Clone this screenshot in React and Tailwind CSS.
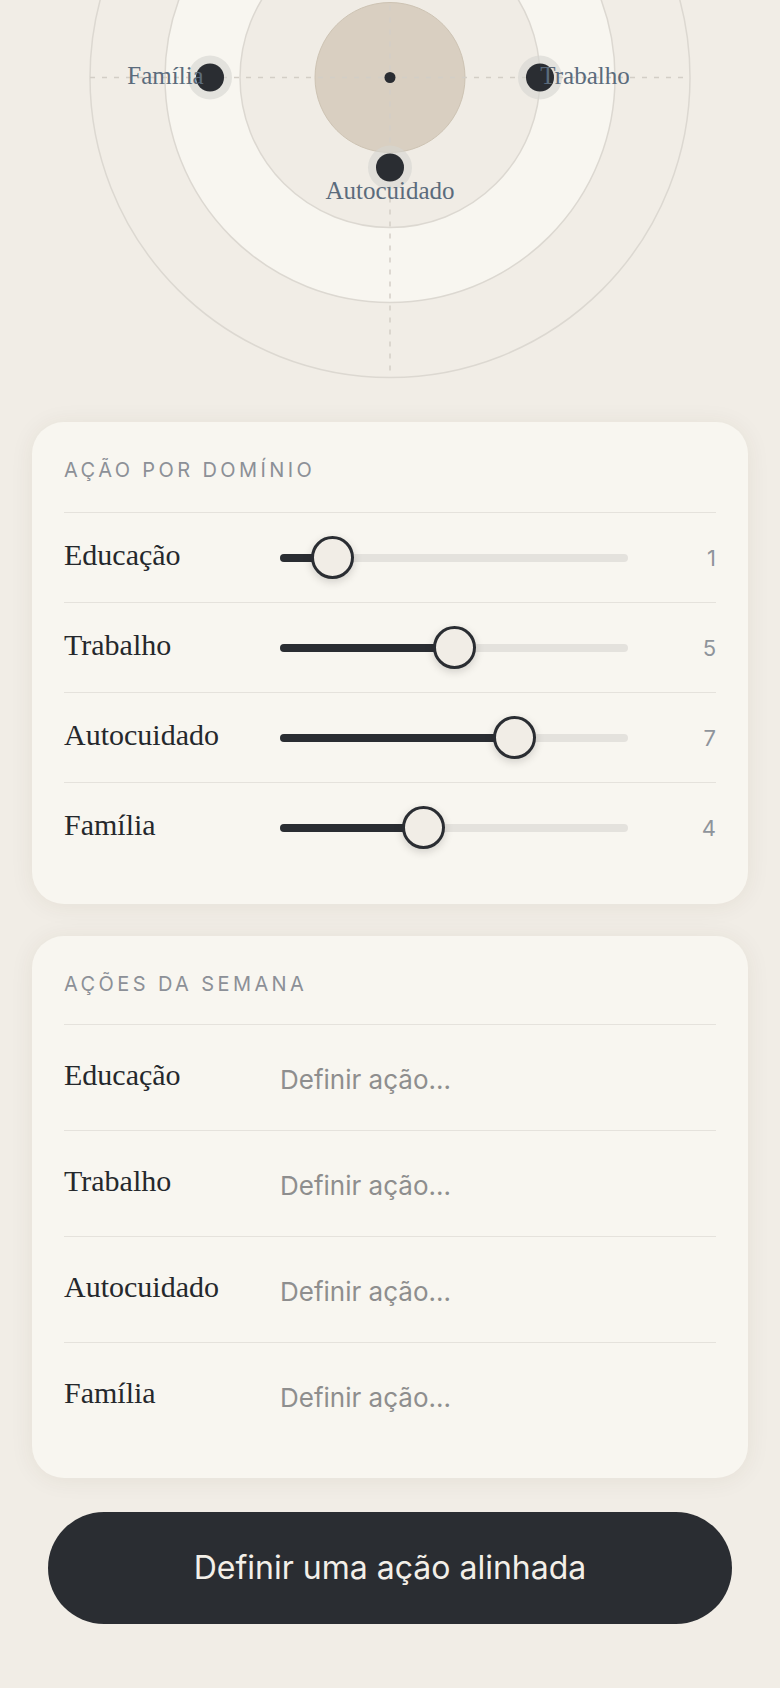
const domains = [
  { name: 'Educação', value: 1, dir: 'top' },
  { name: 'Trabalho', value: 5, dir: 'right' },
  { name: 'Autocuidado', value: 7, dir: 'bottom' },
  { name: 'Família', value: 4, dir: 'left' },
];

const CX = 390;
const CY = 77.5;

// distance from centre grows as the value shrinks
const dotPos = (d) => {
  const r = (10 - d.value) * 30;
  if (d.dir === 'top') return { x: CX, y: CY - r };
  if (d.dir === 'right') return { x: CX + r, y: CY };
  if (d.dir === 'bottom') return { x: CX, y: CY + r };
  return { x: CX - r, y: CY };
};

const labelPos = (d, p) => {
  if (d.dir === 'right') return { x: p.x + 45, y: p.y + 6 };
  if (d.dir === 'left') return { x: p.x - 44.5, y: p.y + 6 };
  if (d.dir === 'bottom') return { x: p.x, y: p.y + 31 };
  return { x: p.x, y: p.y - 26 };
};

const Target = () => (
  <svg width="780" height="390" viewBox="0 0 780 390" className="block shrink-0">
    <circle cx={CX} cy={CY} r="300" fill="#f1ede6" stroke="#dcd8d1" strokeWidth="1.5" />
    <circle cx={CX} cy={CY} r="225" fill="#f8f6f0" stroke="#dcd8d1" strokeWidth="1.5" />
    <circle cx={CX} cy={CY} r="150" fill="#f0ece5" stroke="#dcd8d1" strokeWidth="1.5" />
    <circle cx={CX} cy={CY} r="75" fill="#d9cfc1" stroke="#cdc3b3" strokeWidth="1" />
    <line x1={CX - 300} y1={CY} x2={CX + 300} y2={CY} stroke="#d3cec6" strokeWidth="1.5" strokeDasharray="5 7" />
    <line x1={CX} y1={CY - 300} x2={CX} y2={CY + 294} stroke="#d3cec6" strokeWidth="1.5" strokeDasharray="5 7" />
    <circle cx={CX} cy={CY} r="5.5" fill="#2a2d32" />
    {domains.map((d) => {
      const p = dotPos(d);
      return (
        <g key={d.name}>
          <circle cx={p.x} cy={p.y} r="22" fill="#d6d6d1" fillOpacity="0.6" />
          <circle cx={p.x} cy={p.y} r="14" fill="#2a2d32" />
        </g>
      );
    })}
    {domains
      .filter((d) => d.dir !== 'top')
      .map((d) => {
        const l = labelPos(d, dotPos(d));
        return (
          <text
            key={d.name}
            x={l.x}
            y={l.y}
            textAnchor="middle"
            fill="#5b6b7c"
            fontSize="25"
            fontFamily="'Liberation Serif', serif"
          >
            {d.name}
          </text>
        );
      })}
  </svg>
);

const SectionTitle = ({ children, className }) => (
  <h2
    className={`text-[20px] leading-8 tracking-[0.17em] uppercase text-[#8c9097] font-['Inter',sans-serif] ${className}`}
  >
    {children}
  </h2>
);

const Slider = ({ value }) => {
  const f = value / 10;
  return (
    <div className="relative flex-1 h-[43px] flex items-center">
      <div className="w-full h-2 rounded-full bg-[#e4e2dd]" />
      <div
        className="absolute left-0 h-2 rounded-full bg-[#2a2d32]"
        style={{ width: `calc(${f} * (100% - 43px) + 21.5px)` }}
      />
      <div
        className="absolute top-0 w-[43px] h-[43px] rounded-full border-[3.5px] border-[#2a2d32] bg-[#f1ede6] shadow-[0_3px_8px_rgba(40,35,25,0.18)]"
        style={{ left: `calc(${f} * (100% - 43px))` }}
      />
    </div>
  );
};

const Card = ({ children, className }) => (
  <section
    className={`bg-[#f8f6f0] rounded-[32px] px-8 pt-8 shadow-[0_2px_24px_rgba(70,55,30,0.07)] ${className}`}
  >
    {children}
  </section>
);

export default function App() {
  return (
    <div className="min-h-screen bg-[#f1ede6] flex flex-col items-center pb-16">
      <Target />
      <div className="w-full px-8 flex flex-col gap-8 mt-8">
        <Card className="pb-8">
          <SectionTitle className="pb-[26px]">Ação por domínio</SectionTitle>
          {domains.map((d) => (
            <div key={d.name} className="h-[90px] flex items-center border-t-[1.5px] border-[#e5e2dc]">
              <span className="w-[216px] shrink-0 pb-[5px] text-[30px] leading-none text-[#25282c] font-['Liberation_Serif',serif]">
                {d.name}
              </span>
              <Slider value={d.value} />
              <span className="w-[88px] shrink-0 text-right text-[22px] leading-none text-[#8f949b] font-['Inter',sans-serif]">
                {d.value}
              </span>
            </div>
          ))}
        </Card>

        <Card className="pb-[30px]">
          <SectionTitle className="pb-6">Ações da semana</SectionTitle>
          {domains.map((d) => (
            <div key={d.name} className="h-[106px] flex items-center border-t-[1.5px] border-[#e5e2dc]">
              <span className="w-[216px] shrink-0 pb-[5px] text-[30px] leading-none text-[#25282c] font-['Liberation_Serif',serif]">
                {d.name}
              </span>
              <input
                type="text"
                placeholder="Definir ação..."
                className="flex-1 min-w-0 mt-1 bg-transparent outline-none text-[26px] text-[#25282c] placeholder:text-[#8e8e8e] font-['Inter',sans-serif]"
              />
            </div>
          ))}
        </Card>

        <button
          type="button"
          className="mx-4 mt-[2px] h-[112px] rounded-full bg-[#2a2d32] text-[#f3efe8] text-[32px] font-['Inter',sans-serif]"
        >
          Definir uma ação alinhada
        </button>
      </div>
    </div>
  );
}
